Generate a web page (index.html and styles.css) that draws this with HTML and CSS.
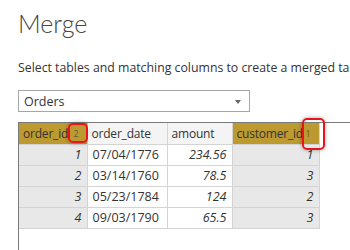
FILE: index.html
```html
<!DOCTYPE html>
<html lang="en">

<head>
    <meta charset="UTF-8">
    <meta name="viewport" content="width=device-width, initial-scale=1.0">
    <title>Merge</title>
    <link rel="stylesheet" href="styles.css">
</head>

<body>
    <!-- Dialog Header -->
    <h1 class="title">Merge</h1>
    <p class="intro">Select tables and matching columns to create a merged table.</p>

    <!-- Table Picker -->
    <div class="select">
        <span>Orders</span>
        <span class="caret"></span>
    </div>

    <!-- Preview Grid -->
    <div class="preview">
        <table class="grid">
            <colgroup>
                <col class="col-id">
                <col class="col-date">
                <col class="col-amount">
                <col class="col-cust">
            </colgroup>
            <thead>
                <tr>
                    <th class="key">
                        <div class="head"><span>order_id</span><span class="order">2</span></div>
                        <span class="mark mark-id"></span>
                    </th>
                    <th><div class="head"><span>order_date</span></div></th>
                    <th><div class="head"><span>amount</span></div></th>
                    <th class="key">
                        <div class="head"><span>customer_id</span><span class="order">1</span></div>
                        <span class="mark mark-cust"></span>
                    </th>
                </tr>
            </thead>
            <tbody>
                <tr>
                    <td class="num shade">1</td>
                    <td>07/04/1776</td>
                    <td class="num">234.56</td>
                    <td class="num shade">1</td>
                </tr>
                <tr>
                    <td class="num shade">2</td>
                    <td>03/14/1760</td>
                    <td class="num">78.5</td>
                    <td class="num shade">3</td>
                </tr>
                <tr>
                    <td class="num shade">3</td>
                    <td>05/23/1784</td>
                    <td class="num">124</td>
                    <td class="num shade">2</td>
                </tr>
                <tr>
                    <td class="num shade">4</td>
                    <td>09/03/1790</td>
                    <td class="num">65.5</td>
                    <td class="num shade">3</td>
                </tr>
            </tbody>
        </table>
    </div>
</body>

</html>
```

FILE: styles.css
```css
/* Global Reset */
* {
    margin: 0;
    padding: 0;
    box-sizing: border-box;
}

html,
body {
    height: 100%;
    overflow: hidden;
}

body {
    background: #fff;
    font-family: 'Open Sans', 'Noto Sans', sans-serif;
    color: #333;
    padding: 0 0 0 18px;
}

/* Header */
.title {
    font-family: Lato, 'Open Sans', sans-serif;
    font-size: 25px;
    font-weight: 300;
    color: #444;
    line-height: 34px;
    margin-top: 6px;
}

.intro {
    font-size: 12.3px;
    line-height: 18px;
    margin-top: 19px;
    white-space: nowrap;
    overflow: hidden;
    color: #333;
}

/* Dropdown */
.select {
    width: 232px;
    height: 22px;
    margin-top: 13px;
    border: 1px solid #a6a6a6;
    display: flex;
    align-items: center;
    justify-content: space-between;
    padding: 0 8px 0 5px;
    font-size: 12.5px;
    color: #333;
}

.caret {
    width: 0;
    height: 0;
    border-left: 3px solid transparent;
    border-right: 3px solid transparent;
    border-top: 4px solid #666;
    margin-top: 1px;
}

/* Preview grid */
.preview {
    margin-top: 10px;
    height: 200px;
    border-top: 1px solid #7a7a7a;
    border-left: 1px solid #7a7a7a;
}

.grid {
    border-collapse: collapse;
    table-layout: fixed;
    width: 300px;
    font-size: 12.5px;
    color: #333;
}

.col-id { width: 68px; }
.col-date { width: 80px; }
.col-amount { width: 65px; }
.col-cust { width: 87px; }

.grid th,
.grid td {
    height: 21px;
    padding: 0 5px;
    border: 1px solid #d4d4d4;
    white-space: nowrap;
    line-height: 19px;
}

.grid thead th {
    border-top: none;
    font-size: 12px;
    letter-spacing: -0.2px;
    padding: 0 4px;
}

.grid tr th:first-child,
.grid tr td:first-child {
    border-left: none;
}

.grid th {
    text-align: left;
    font-weight: normal;
    background: #f4f4f4;
    position: relative;
}

.grid th.key {
    background: #bd9a2f;
}

.head {
    display: flex;
    justify-content: space-between;
    align-items: center;
}

.order {
    font-size: 9px;
    color: #6a5a30;
    padding-right: 4px;
}

.num {
    text-align: right;
    font-style: italic;
}

.shade {
    background: #e8e8e8;
}

/* Highlight marks */
.mark {
    position: absolute;
    border: 2px solid #e8141a;
    border-radius: 5px;
    box-shadow: 0 0 4px rgba(0, 0, 0, 0.35);
}

.mark-id {
    right: -1px;
    top: 0;
    width: 20px;
    height: 20px;
}

.mark-cust {
    right: -6px;
    top: -5px;
    width: 23px;
    height: 32px;
}
```
